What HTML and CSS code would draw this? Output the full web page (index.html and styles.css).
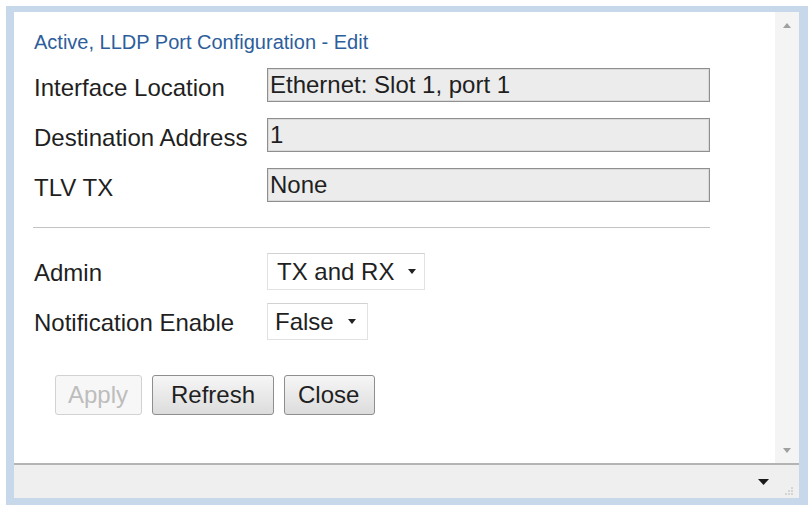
FILE: index.html
```html
<!DOCTYPE html>
<html>
<head>
<meta charset="utf-8">
<link rel="stylesheet" href="styles.css">
</head>
<body>
<div class="frame">
  <div class="main">
    <div class="content">
      <div class="title">Active, LLDP Port Configuration - Edit</div>
      <div class="grid info">
        <div class="label">Interface Location</div>
        <div class="field">Ethernet: Slot 1, port 1</div>
        <div class="label">Destination Address</div>
        <div class="field">1</div>
        <div class="label">TLV TX</div>
        <div class="field">None</div>
      </div>
      <div class="sep"></div>
      <div class="grid opts">
        <div class="label">Admin</div>
        <div class="select sel-admin"><span>TX and RX</span><svg width="8" height="5" viewBox="0 0 8 5"><path d="M0 0h8L4 5z" fill="#222"/></svg></div>
        <div class="label">Notification Enable</div>
        <div class="select sel-notif"><span>False</span><svg width="8" height="5" viewBox="0 0 8 5"><path d="M0 0h8L4 5z" fill="#222"/></svg></div>
      </div>
      <div class="buttons">
        <div class="btn btn-apply disabled">Apply</div>
        <div class="btn btn-refresh">Refresh</div>
        <div class="btn btn-close">Close</div>
      </div>
    </div>
    <div class="scrollbar">
      <svg width="8" height="5" viewBox="0 0 8 5"><path d="M0 5h8L4 0z" fill="#a0a0a0"/></svg>
      <svg width="8" height="5" viewBox="0 0 8 5"><path d="M0 0h8L4 5z" fill="#a0a0a0"/></svg>
    </div>
  </div>
  <div class="bottombar">
    <svg class="ddarrow" width="11" height="6" viewBox="0 0 11 6"><path d="M0 0h11L5.5 6z" fill="#1a1a1a"/></svg>
    <svg class="grip" width="8" height="8" viewBox="0 0 8 8"><g fill="#d4d4d4"><rect x="6" y="0" width="2" height="2"/><rect x="3" y="3" width="2" height="2"/><rect x="6" y="3" width="2" height="2"/><rect x="0" y="6" width="2" height="2"/><rect x="3" y="6" width="2" height="2"/><rect x="6" y="6" width="2" height="2"/></g></svg>
  </div>
</div>
</body>
</html>
```

FILE: styles.css
```css
html, body {
  margin: 0;
  padding: 0;
  background: #ffffff;
}
body {
  font-family: "Liberation Sans", Arial, sans-serif;
  color: #1f1f1f;
}
.frame {
  box-sizing: border-box;
  margin: 6px 0 0 6px;
  width: 802px;
  height: 499px;
  border-style: solid;
  border-color: #c8d8eb;
  border-width: 6px 9px 7px 8px;
  display: flex;
  flex-direction: column;
  background: #ffffff;
}
.main {
  height: 451px;
  display: flex;
}
.content {
  flex: 1;
  padding: 18px 0 0 20px;
}
.title {
  font-size: 20px;
  line-height: 24px;
  color: #2d5e9b;
  margin-bottom: 14px;
}
.grid {
  display: grid;
  grid-template-columns: 233px auto;
  justify-items: start;
}
.info {
  grid-auto-rows: 34px;
  row-gap: 16px;
}
.label {
  font-size: 24px;
  line-height: 34px;
  padding-top: 3px;
  white-space: nowrap;
}
.field {
  box-sizing: border-box;
  width: 443px;
  height: 34px;
  border: 1px solid #8f8f8f;
  box-shadow: inset 0 0 0 1px #dadada;
  background: #ececec;
  font-size: 24px;
  line-height: 32px;
  padding-left: 2px;
  color: #1f1f1f;
}
.sep {
  width: 677px;
  height: 1px;
  background: #c4c4c4;
  margin: 25px 0 25px -1px;
}
.opts {
  grid-auto-rows: 37px;
  row-gap: 13px;
}
.opts .label {
  line-height: 37px;
  padding-top: 1px;
}
.select {
  box-sizing: border-box;
  height: 37px;
  display: flex;
  align-items: center;
  border: 1px solid #e2e2e2;
  border-top-color: #d2d2d2;
  background: #ffffff;
  font-size: 24px;
  line-height: 35px;
  color: #1f1f1f;
}
.sel-admin {
  width: 158px;
  padding-left: 9px;
  gap: 14px;
}
.sel-notif {
  width: 101px;
  padding-left: 7px;
  gap: 14px;
}
.buttons {
  display: flex;
  gap: 10px;
  margin: 35px 0 0 21px;
}
.btn {
  box-sizing: border-box;
  height: 40px;
  border: 1px solid #8e8e8e;
  border-radius: 3px;
  background: linear-gradient(#f6f6f6, #dcdcdc);
  font-size: 24px;
  line-height: 38px;
  color: #1f1f1f;
}
.btn-apply {
  width: 87px;
  padding-left: 12px;
}
.btn-refresh {
  width: 122px;
  padding-left: 18px;
}
.btn-close {
  width: 91px;
  padding-left: 13px;
}
.disabled {
  border-color: #d2d2d2;
  background: #f7f7f7;
  color: #bdbdbd;
}
.scrollbar {
  width: 24px;
  background: #f4f4f4;
  display: flex;
  flex-direction: column;
  justify-content: space-between;
  align-items: center;
  padding: 11px 0 10px;
  box-sizing: border-box;
}
.bottombar {
  flex: 1;
  border-top: 2px solid #b4b4b4;
  background: #efefef;
  display: flex;
  align-items: center;
  justify-content: flex-end;
  padding-right: 6px;
  gap: 16px;
}
.grip {
  align-self: flex-end;
  margin-bottom: 3px;
}
```
